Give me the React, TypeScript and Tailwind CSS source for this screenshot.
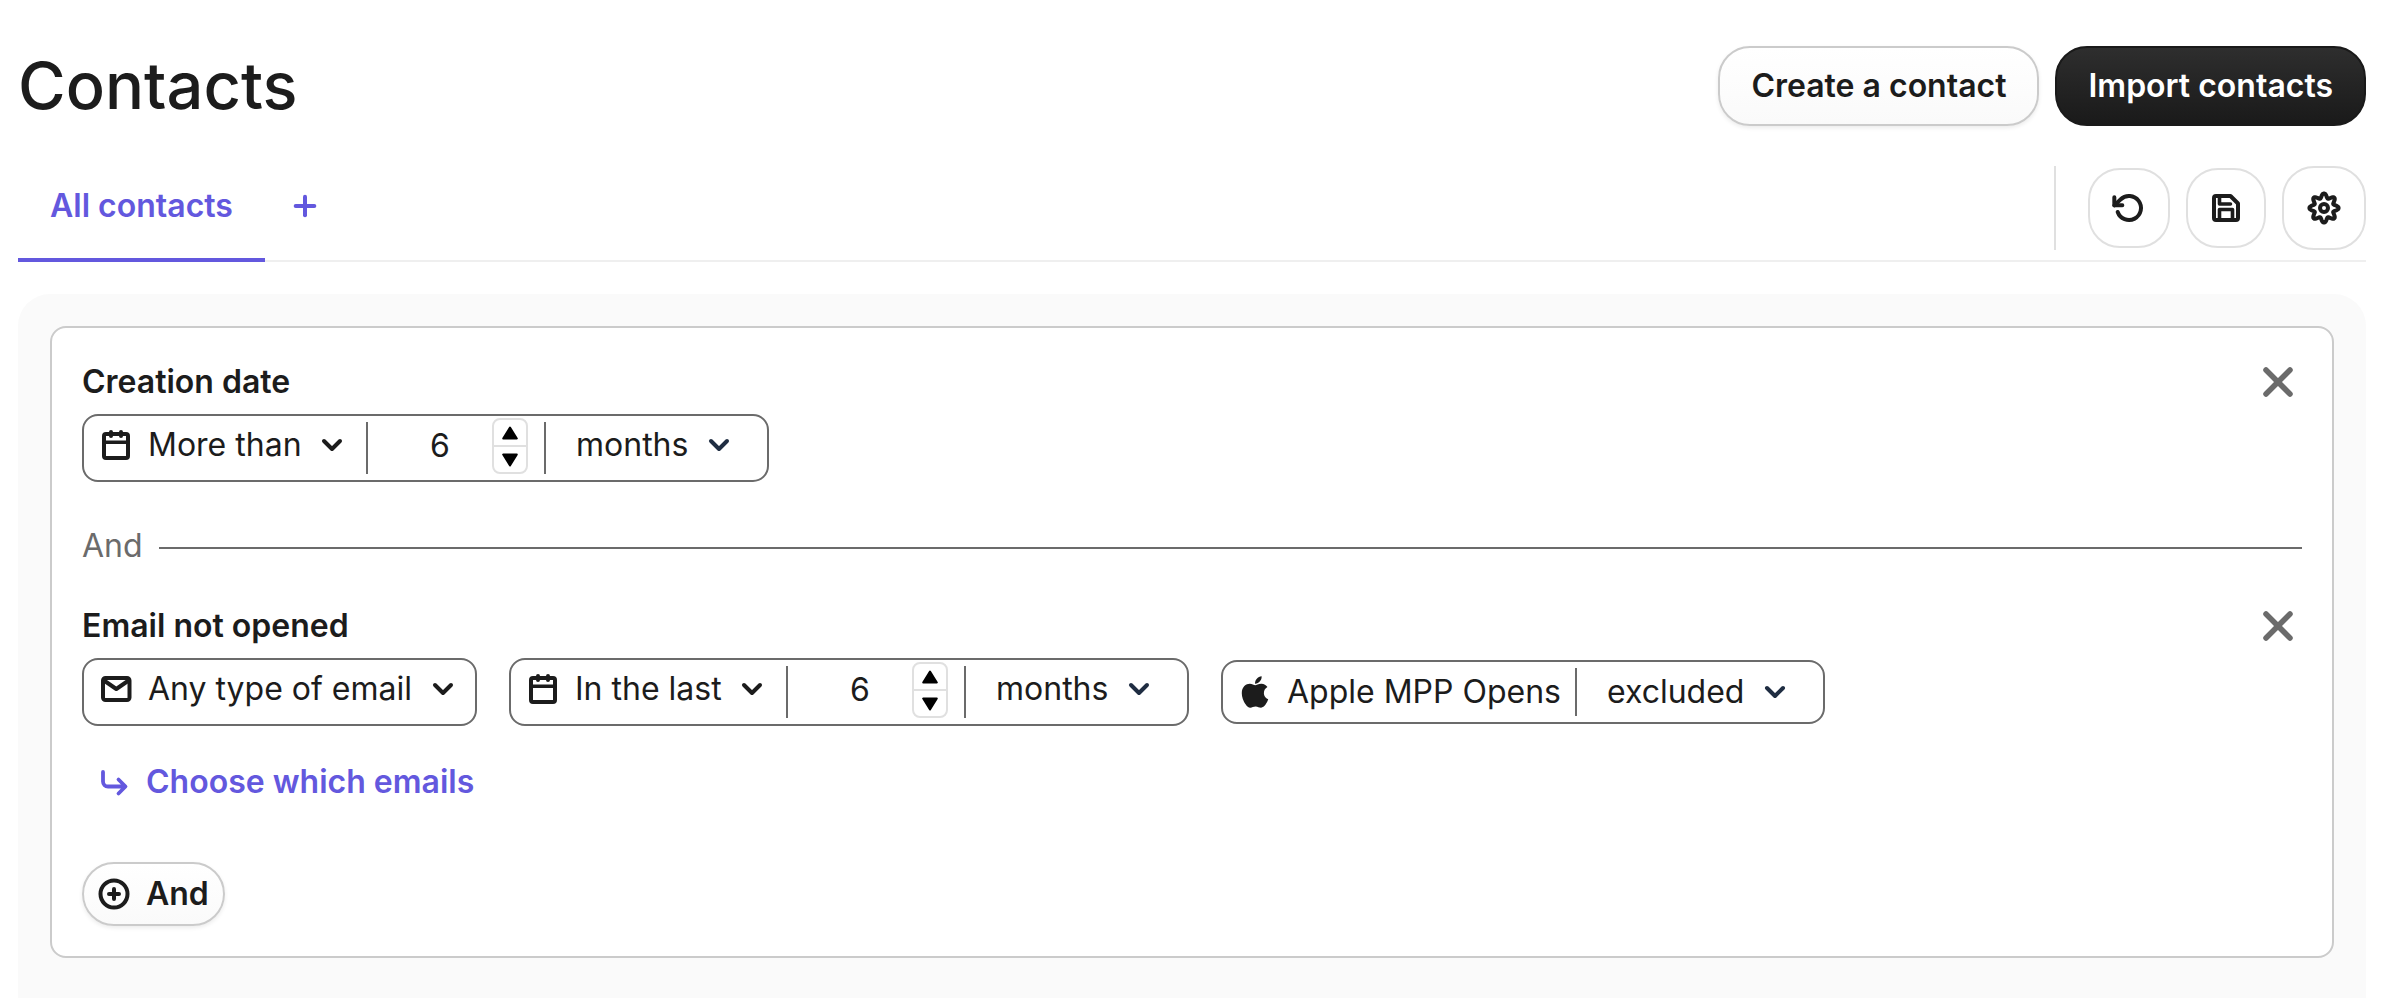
import React, { useState } from 'react';
import { ChevronDown, Plus, X } from 'lucide-react';
import { FiRotateCcw } from 'react-icons/fi';
import { FaApple } from 'react-icons/fa';

interface IconProps {
  className?: string;
}

const GEAR_PATH = Array.from({ length: 128 }, (_, i) => {
  const a = (i / 128) * Math.PI * 2;
  const r = 12.3 + 2.3 * Math.cos(8 * a);
  return `${i ? 'L' : 'M'}${(17 + r * Math.sin(a)).toFixed(2)} ${(17 - r * Math.cos(a)).toFixed(2)}`;
}).join('') + 'Z';

const CalendarIcon: React.FC<IconProps> = ({ className = '' }) => (
  <svg className={`w-8 h-8 flex-none ${className}`} viewBox="0 0 32 32" fill="none" stroke="currentColor" strokeWidth="4" strokeLinecap="round" strokeLinejoin="round">
    <rect x="4" y="5" width="24" height="24" rx="2" />
    <path d="M11 3v4M21 3v4" />
    <path d="M4 13.3h24" strokeWidth="3.4" />
  </svg>
);

const MailIcon: React.FC<IconProps> = ({ className = '' }) => (
  <svg className={`w-8 h-8 flex-none ${className}`} viewBox="0 0 32 32" fill="none" stroke="currentColor" strokeWidth="4" strokeLinecap="round" strokeLinejoin="round">
    <rect x="3" y="5" width="26.5" height="22" rx="2.5" />
    <path d="M4 7.5l12.3 8.5 12.3-8.5" />
  </svg>
);

const SaveIcon: React.FC = () => (
  <svg className="w-8 h-8" viewBox="0 0 32 32" fill="none" stroke="currentColor" strokeWidth="4" strokeLinecap="round" strokeLinejoin="round">
    <path d="M6 4h14.5L28 11.5V26a2 2 0 0 1-2 2H6a2 2 0 0 1-2-2V6a2 2 0 0 1 2-2z" />
    <path d="M9.5 27v-9.5h13V27M9.5 5v7H20.5" strokeWidth="3.6" />
  </svg>
);

const GearIcon: React.FC = () => (
  <svg className="w-[34px] h-[34px]" viewBox="0 0 34 34" fill="none" stroke="currentColor" strokeWidth="4" strokeLinejoin="round">
    <path d={GEAR_PATH} />
    <circle cx="17" cy="17" r="4" />
  </svg>
);

const BranchIcon: React.FC = () => (
  <svg className="w-8 h-8 flex-none" viewBox="0 0 32 32" fill="none" stroke="currentColor" strokeWidth="3.8" strokeLinecap="round" strokeLinejoin="round">
    <path d="M5 6v9.5a5 5 0 0 0 5 5h17M20.500 13.500l7 7-7 7" />
  </svg>
);

const CirclePlusIcon: React.FC = () => (
  <svg className="w-8 h-8 flex-none" viewBox="0 0 32 32" fill="none" stroke="currentColor" strokeWidth="4" strokeLinecap="round">
    <circle cx="16" cy="16" r="13.500" />
    <path d="M11 16h10M16 11v10" />
  </svg>
);

interface PickerProps {
  label: string;
  options: string[];
  dark?: boolean;
}

// native select with the arrow laid over its right padding
const Picker: React.FC<PickerProps> = ({ label, options, dark }) => (
  <div className="relative flex items-center">
    <select aria-label={label} className="appearance-none bg-transparent pr-[46px] leading-[48px] outline-none cursor-pointer">
      {options.map(o => <option key={o}>{o}</option>)}
    </select>
    <ChevronDown size={32} strokeWidth={3} className={`absolute right-0 pointer-events-none ${dark ? 'text-[#1c1c1c]' : 'text-[#1f2d42]'}`} />
  </div>
);

const Divider = () => <div className="w-0.5 self-stretch my-1.5 bg-[#6b6b6b]" />;

const Triangle: React.FC<{ down?: boolean }> = ({ down }) => (
  <svg className={`w-4 h-4 ${down ? 'rotate-180' : ''}`} viewBox="0 0 16 16" fill="#000" stroke="#000" strokeWidth="2" strokeLinejoin="round">
    <path d="M8 2.500L14.800 13.500H1.200z" />
  </svg>
);

const NumberField: React.FC<{ label: string }> = ({ label }) => {
  const [value, setValue] = useState(6);
  return (
    <div className="flex items-center pr-4 pb-1">
      <input
        type="number"
        aria-label={label}
        value={value}
        onChange={e => setValue(Number(e.target.value))}
        className="w-[124px] pl-5 text-center leading-[48px] outline-none bg-transparent [appearance:textfield] [&::-webkit-inner-spin-button]:appearance-none"
      />
      <div className="w-9 h-14 flex flex-col border-2 border-[#e0e0e0] rounded-lg divide-y-2 divide-[#e0e0e0]">
        <button aria-label="Increase" onClick={() => setValue(v => v + 1)} className="flex-1 flex items-center justify-center"><Triangle /></button>
        <button aria-label="Decrease" onClick={() => setValue(v => v - 1)} className="flex-1 flex items-center justify-center"><Triangle down /></button>
      </div>
    </div>
  );
};

const Period: React.FC<{ name: string; options: string[] }> = ({ name, options }) => (
  <div className="flex h-[68px] border-2 border-[#6b6b6b] rounded-2xl">
    <div className="flex items-center gap-4 pl-4 pr-[18px] pb-1.5">
      <CalendarIcon />
      <Picker label={`${name} comparison`} options={options} dark />
    </div>
    <Divider />
    <NumberField label={`${name} amount`} />
    <Divider />
    <div className="flex items-center pl-[30px] pr-8 pb-1.5">
      <Picker label={`${name} unit`} options={['months', 'days', 'years']} />
    </div>
  </div>
);

const ConditionHeader: React.FC<{ title: string }> = ({ title }) => (
  <div className="flex items-center justify-between mb-2">
    <h2 className="font-semibold leading-[48px]">{title}</h2>
    <button aria-label={`Remove ${title}`} className="text-[#6b6b6b]"><X size={48} strokeWidth={2.75} /></button>
  </div>
);

export default function App() {
  return (
    <div className="min-h-screen flex flex-col bg-white text-[#1c1c1c] text-[32px] px-[18px] pt-[46px] font-['Inter',sans-serif]">
      <header className="flex items-center justify-between h-20">
        <h1 className="text-[65px] leading-[80px] font-medium">Contacts</h1>
        <div className="flex gap-4 font-semibold">
          <button className="h-20 px-[31px] border-2 border-[#cbcbcb] rounded-[32px] bg-linear-to-b from-white to-[#fafafa] shadow-[0_2px_4px_rgba(0,0,0,0.08)]">Create a contact</button>
          <button className="h-20 px-[31px] border-2 border-[#1a1a1a] rounded-[32px] bg-linear-to-b from-[#2e2e2e] to-[#1a1a1a] text-white">Import contacts</button>
        </div>
      </header>

      <nav className="flex items-start justify-between mt-10 border-b-2 border-[#efefef]">
        <div className="flex text-[#6358de]">
          <a href="#all" className="px-8 pb-3 -mb-0.5 border-b-4 border-[#6358de] font-semibold leading-[80px]">All contacts</a>
          <button aria-label="Add a view" className="h-20 px-6"><Plus size={32} strokeWidth={3} /></button>
        </div>
        <div className="flex items-center gap-4 pl-8 mb-2.5 border-l-2 border-[#e0e0e0]">
          <button aria-label="Reset" className="w-[82px] h-20 flex items-center justify-center border-2 border-[#e0e0e0] rounded-[32px]"><FiRotateCcw size={32} strokeWidth={3} className="overflow-visible" /></button>
          <button aria-label="Save" className="w-20 h-20 flex items-center justify-center border-2 border-[#e0e0e0] rounded-[32px]"><SaveIcon /></button>
          <button aria-label="Settings" className="w-[84px] h-[84px] flex items-center justify-center border-2 border-[#e0e0e0] rounded-[32px]"><GearIcon /></button>
        </div>
      </nav>

      <main className="flex-1 mt-8 px-8 pt-8 pb-6 bg-[#fafafa] rounded-t-[32px]">
        <div className="bg-white border-2 border-[#cbcbcb] rounded-2xl p-[30px]">
          <section>
            <ConditionHeader title="Creation date" />
            <div className="flex">
              <Period name="Creation date" options={['More than', 'Less than']} />
            </div>
          </section>

          <div className="flex items-center gap-4 mt-10 mb-8 text-[#6b6b6b] leading-[48px]">
            <span>And</span>
            <div className="flex-1 h-0.5 mt-1 bg-[#6b6b6b]" />
          </div>

          <section>
            <ConditionHeader title="Email not opened" />
            <div className="flex flex-wrap items-center gap-8">
              <div className="flex items-center gap-4 h-[68px] px-4 pb-1.5 border-2 border-[#6b6b6b] rounded-2xl">
                <MailIcon />
                <Picker label="Email type" options={['Any type of email', 'Campaign']} dark />
              </div>
              <Period name="Email not opened" options={['In the last', 'Before']} />
              <div className="flex h-16 border-2 border-[#6b6b6b] rounded-2xl">
                <div className="flex items-center gap-4 pl-4 pr-3.5">
                  <FaApple size={36} className="flex-none -mx-0.5" />
                  <span>Apple MPP Opens</span>
                </div>
                <Divider />
                <div className="flex items-center pl-[30px] pr-8">
                  <Picker label="Apple MPP Opens" options={['excluded', 'included']} />
                </div>
              </div>
            </div>
            <a href="#emails" className="flex w-fit items-center gap-4 mt-8 pl-4 font-semibold leading-[48px] text-[#6358de]">
              <BranchIcon />
              Choose which emails
            </a>
          </section>

          <button className="flex items-center gap-4 h-16 mt-14 px-3.5 border-2 border-[#cbcbcb] rounded-full bg-linear-to-b from-white to-[#fafafa] shadow-[0_2px_4px_rgba(0,0,0,0.08)] font-semibold">
            <CirclePlusIcon />
            And
          </button>
        </div>
      </main>
    </div>
  );
}
